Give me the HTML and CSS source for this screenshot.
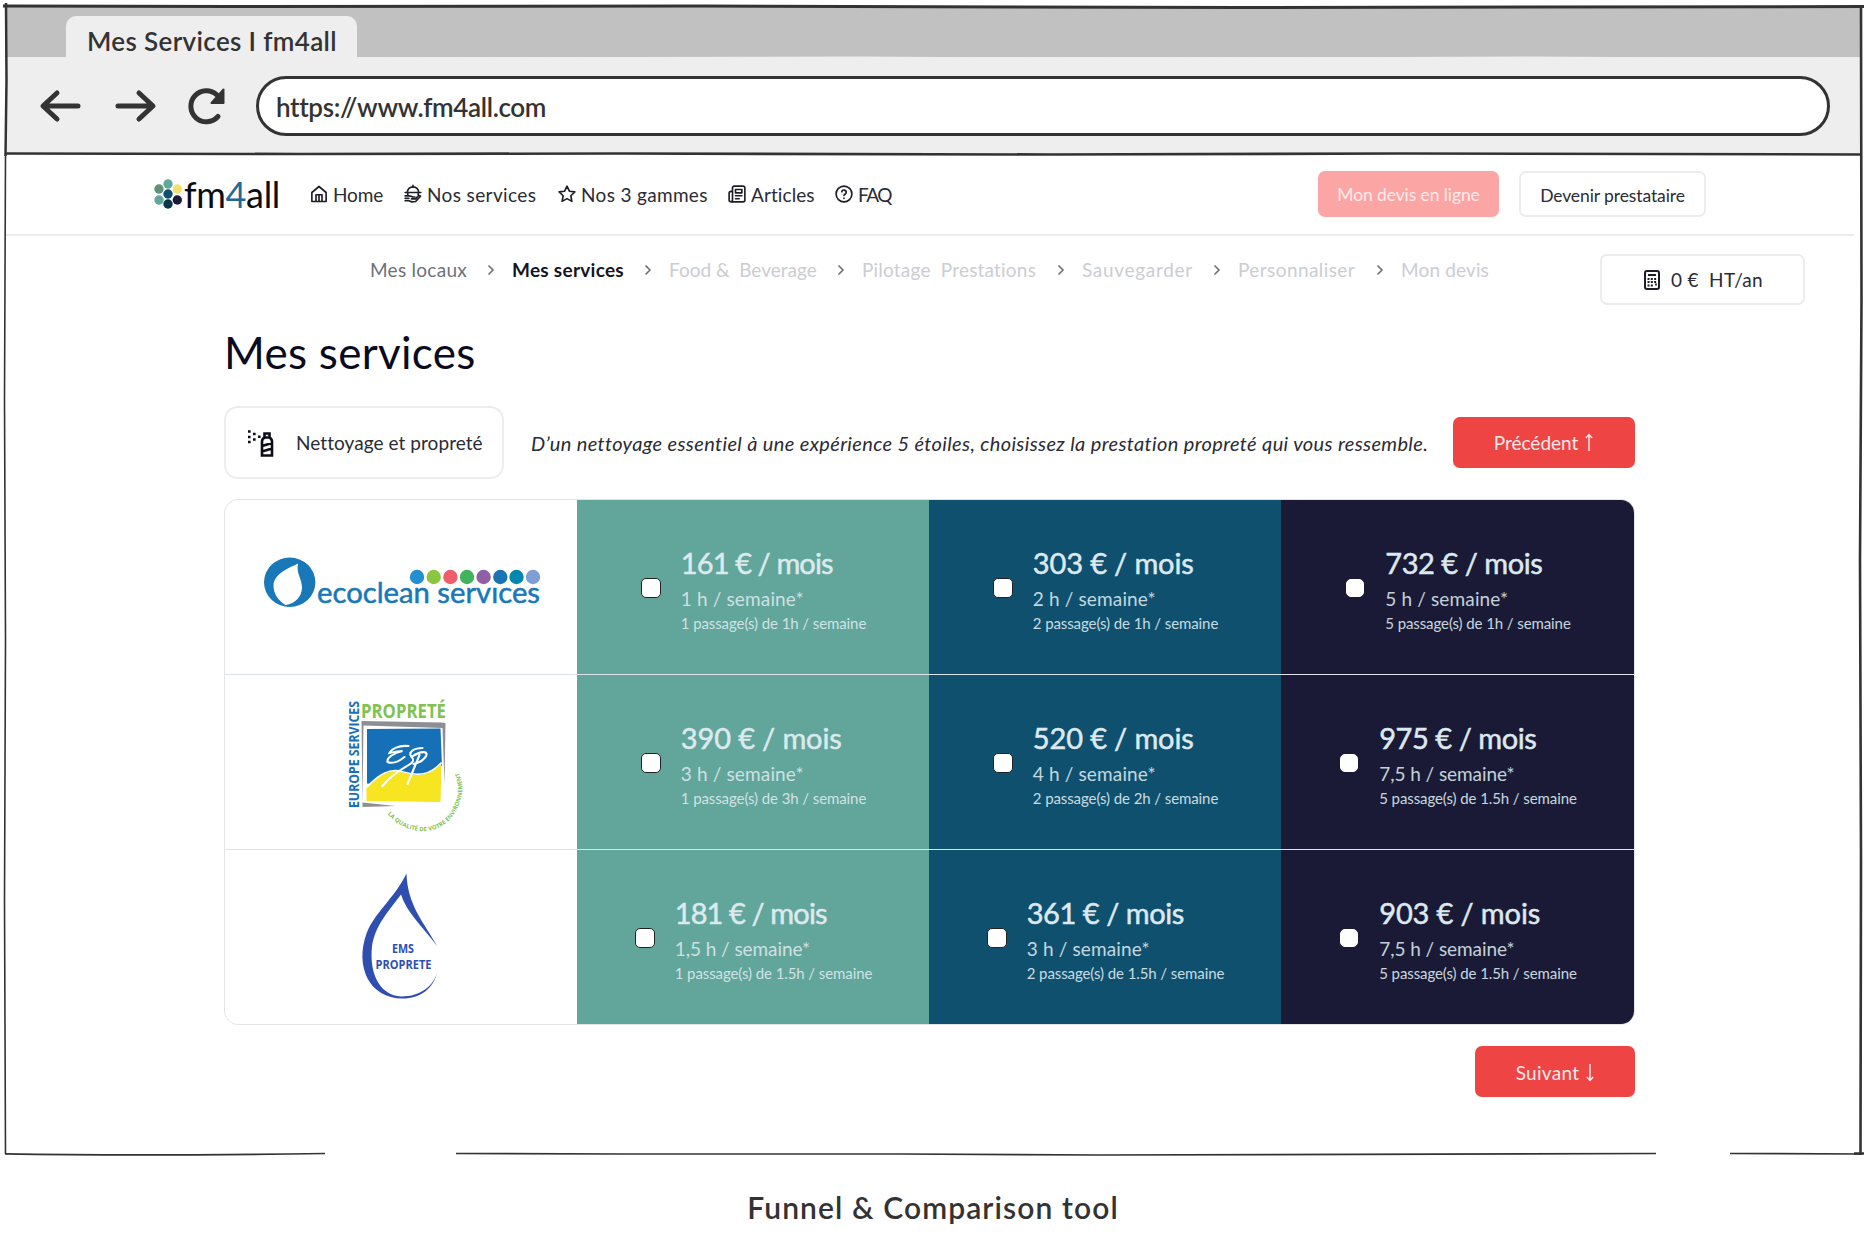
FILE: index.html
```html
<!DOCTYPE html>
<html lang="fr">
<head>
<meta charset="utf-8">
<title>Mes Services | fm4all</title>
<link rel="stylesheet" href="styles.css">
</head>
<body>
<div class="browser">
  <div class="tabs"><div class="tab"><span class="t-tab">Mes Services I fm4all</span></div></div>
  <div class="toolbar">
    <svg class="ctl" width="40" height="40" viewBox="0 0 40 40"><path d="M38 20H4M17 7L3 20l14 13"/></svg>
    <svg class="ctl fwd" width="40" height="40" viewBox="0 0 40 40"><path d="M2 20h34M23 7l14 13-14 13"/></svg>
    <svg class="ctl rel" width="40" height="40" viewBox="0 0 40 40"><path d="M31 30.500A15.500 15.500 0 1 1 30 9"/><path class="fill" d="M36.500 3.500V17H24.500z"/></svg>
    <div class="url"><span class="t-url">https://www.fm4all.com</span></div>
  </div>
  <header class="nav">
    <div class="logo">
      <svg width="30" height="30" viewBox="0 0 30 30"><circle cx="14" cy="5" r="4.700" fill="#62a79b"/><circle cx="5" cy="10" r="4.700" fill="#5b9279"/><circle cx="23.300" cy="10" r="4.700" fill="#f4de6c"/><circle cx="14" cy="15" r="4.700" fill="#10506f"/><circle cx="5" cy="21" r="4.700" fill="#62a79b"/><circle cx="23.300" cy="21" r="4.700" fill="#1b1a38"/><circle cx="14" cy="25" r="4.700" fill="#0c3548"/></svg>
      <span class="t-logo">fm<b>4</b>all</span>
    </div>
    <nav class="links">
      <a class="n1"><svg class="ic" viewBox="0 0 24 24"><path d="M2.500 10L12 2l9.500 8v12h-19zM8 22v-9h8v9M12 13v9"/></svg><span>Home</span></a>
      <a class="n2"><svg class="ic" viewBox="0 0 24 24"><path d="M12 .5V3M4.500 9.500a7.500 7 0 0 1 15 0M1.500 10h21M5 10v3.500M19 10v3M1.500 14.500h5c3 0 4 1.500 6 1.500h2M1.500 21h5l4 1.500 5-.5 6.500-7c-1-1.500-2.500-1-3.500 0l-3 3.500H10M1.500 17.800h5"/></svg><span>Nos services</span></a>
      <a class="n3"><svg class="ic" viewBox="0 0 24 24"><path d="M12 1.500l3.200 6.800 7.300.9-5.400 5.100 1.400 7.500L12 18.200l-6.500 3.600 1.400-7.500L1.500 9.200l7.300-.9z"/></svg><span>Nos 3 gammes</span></a>
      <a class="n4"><svg class="ic" viewBox="0 0 24 24"><path d="M4 22.500h16a2.500 2.500 0 0 0 2.500-2.500V4A2.500 2.500 0 0 0 20 1.500H8.500A2.500 2.500 0 0 0 6 4v16a2.200 2.200 0 0 1-4.500 0v-9c0-1.500.9-2.500 2.500-2.500h2M10 6h8.500v4.500H10zM10 14.300h8.500M10 18.300h5"/></svg><span>Articles</span></a>
      <a class="n5"><svg class="ic" viewBox="0 0 24 24"><circle cx="12" cy="12" r="10.500"/><path d="M9 9a3 3 0 0 1 5.900 1c0 2-2.900 2.500-2.900 4M12 17.500v.5"/></svg><span>FAQ</span></a>
    </nav>
    <div class="actions">
      <div class="btn pink">Mon devis en ligne</div>
      <div class="btn line">Devenir prestataire</div>
    </div>
  </header>
  <div class="crumbrow">
    <div class="crumbs">
      <span class="c1">Mes locaux</span><svg class="sep" viewBox="0 0 8 12"><path d="M1.500 1.500L6 6l-4.500 4.500"/></svg>
      <span class="c2">Mes services</span><svg class="sep" viewBox="0 0 8 12"><path d="M1.500 1.500L6 6l-4.500 4.500"/></svg>
      <span class="c3">Food &amp;&nbsp; Beverage</span><svg class="sep" viewBox="0 0 8 12"><path d="M1.500 1.500L6 6l-4.500 4.500"/></svg>
      <span class="c4">Pilotage&nbsp; Prestations</span><svg class="sep" viewBox="0 0 8 12"><path d="M1.500 1.500L6 6l-4.500 4.500"/></svg>
      <span class="c5">Sauvegarder</span><svg class="sep" viewBox="0 0 8 12"><path d="M1.500 1.500L6 6l-4.500 4.500"/></svg>
      <span class="c6">Personnaliser</span><svg class="sep" viewBox="0 0 8 12"><path d="M1.500 1.500L6 6l-4.500 4.500"/></svg>
      <span class="c7">Mon devis</span>
    </div>
    <div class="total">
      <svg width="16" height="20" viewBox="0 0 16 20"><rect x="1" y="1" width="14" height="18" rx="2"/><path d="M4 5h8"/><path class="dots" d="M3.500 9h9M3.500 12h9M3.500 15.500h6M12 13.500v3"/></svg>
      <span>0 €&nbsp; HT/an</span>
    </div>
  </div>
  <main class="content">
    <h1>Mes services</h1>
    <div class="intro">
      <div class="chip">
        <svg width="28" height="28" viewBox="0 0 28 28"><path class="spray" d="M1 2.500h2.600M1 8h2.600M1 13h2.600M6 5h2.600M6 10.500h2.600M11 7.700h2.600"/><path class="can" d="M17.500 8.500v-4h5v4M15 26.500V12.500c0-2 1.500-3.500 3-4h4c1.500.5 3 2 3 4v14zM15 17l10-3M15 22.500l10-3"/></svg>
        <span>Nettoyage et propreté</span>
      </div>
      <em class="t-em">D’un nettoyage essentiel à une expérience 5 étoiles, choisissez la prestation propreté qui vous ressemble.</em>
      <div class="btn red prev"><span>Précédent</span><svg class="arr" viewBox="0 0 8 18"><path d="M4 17V1.500M1 4.800L4 1.500l3 3.300"/></svg></div>
    </div>
    <div class="grid">
      <div class="brand">
        <svg width="300" height="80" viewBox="251 547 300 80"><ellipse cx="289.700" cy="582.300" rx="25.700" ry="24.700" fill="#1978b8"/><path d="M298 563.500c-10 5-23 10-24.500 21-.5 10 6 17 12 20.500 10-1.500 16-8 16.500-17 0-10-6-14-4-24.500z" fill="#fff"/><g><circle cx="417" cy="577" r="7.200" fill="#228fd0"/><circle cx="433.700" cy="577" r="7.200" fill="#8cc540"/><circle cx="450.400" cy="577" r="7.200" fill="#ef5d6c"/><circle cx="467" cy="577" r="7.200" fill="#41b35a"/><circle cx="483.600" cy="577" r="7.200" fill="#8f5fa8"/><circle cx="500.300" cy="577" r="7.200" fill="#1a73b4"/><circle cx="516.500" cy="577" r="7.200" fill="#0487ae"/><circle cx="533" cy="577" r="7.200" fill="#7d9fd3"/></g><text x="317" y="603" textLength="223" lengthAdjust="spacingAndGlyphs" class="eco">ecoclean servıces</text></svg>
      </div>
      <label class="cell g"><i></i><span><b class="one">161 € / mois</b><u>1 h / semaine*</u><s>1 passage(s) de 1h / semaine</s></span></label>
      <label class="cell b"><i></i><span><b>303 € / mois</b><u>2 h / semaine*</u><s>2 passage(s) de 1h / semaine</s></span></label>
      <label class="cell n"><i></i><span><b class="seven">732 € / mois</b><u>5 h / semaine*</u><s>5 passage(s) de 1h / semaine</s></span></label>
      <div class="brand">
        <svg width="130" height="150" viewBox="335.500 687 130 150"><text class="eur" transform="translate(358.500 808) rotate(-90)" textLength="107" lengthAdjust="spacingAndGlyphs">EUROPE SERVICES</text><text class="pro" x="360.500" y="718" textLength="85" lengthAdjust="spacingAndGlyphs">PROPRETÉ</text><path d="M361 721l80 1.500 4 .5-1 62-2-57-79-2.500-1 77 33 3.500-33 1z" fill="#8d8f94"/><path d="M366.500 729l73.500-.5 1.500 37-34 22-41-4z" fill="#1570b8"/><path d="M366 788c12-13 23-20 37-15.500 14 4 26 4 38-9.500l-1 39-74-1z" fill="#f6e520"/><path d="M366 787.500c12-13 23-20 37-15.500 14 4 26 4 38-9.500" fill="none" stroke="#fff" stroke-width="1.600"/><path d="M408 746c-10-1-17 3-19 7 4-1 9-2 13-2-9 2-16 7-15 11 5 2 12-1 17-5M422 748c-9 0-13 4-12 7 1 3 5 4 1 8-5 4-18 9-29 23M419 755l-12 29M411 757c10-7 18-6 14 0-3 4-7 6-12 7" fill="none" stroke="#fff" stroke-width="2.100" stroke-linecap="round"/><path id="arc" d="M387 814C408 838 446 839 459 803C465 786 460 772 450 758" fill="none"/><text class="env"><textPath href="#arc" textLength="121">LA QUALITÉ DE VOTRE ENVIRONNEMENT</textPath></text></svg>
      </div>
      <label class="cell g"><i></i><span><b>390 € / mois</b><u>3 h / semaine*</u><s>1 passage(s) de 3h / semaine</s></span></label>
      <label class="cell b"><i></i><span><b>520 € / mois</b><u>4 h / semaine*</u><s>2 passage(s) de 2h / semaine</s></span></label>
      <label class="cell n"><i></i><span><b class="seven">975 € / mois</b><u class="half">7,5 h / semaine*</u><s>5 passage(s) de 1.5h / semaine</s></span></label>
      <div class="brand">
        <svg width="90" height="134" viewBox="356.500 869.500 90 134"><path fill-rule="evenodd" d="M407 873c1 31 16 47 31 73-15-20-31-34-36.500-52-12 16-26 31-29 52-3 29 9 49 29 50 20 0 33-11 36.500-25-4 17-17 27-35 27-33 0-48-32-36-65 8-21 27-34 40-60z" fill="#2f4fb0"/><text class="ems" x="392.500" y="952" textLength="22" lengthAdjust="spacingAndGlyphs">EMS</text><text class="ems" x="376" y="968" textLength="56" lengthAdjust="spacingAndGlyphs">PROPRETE</text></svg>
      </div>
      <label class="cell g"><i></i><span><b class="one">181 € / mois</b><u class="half">1,5 h / semaine*</u><s>1 passage(s) de 1.5h / semaine</s></span></label>
      <label class="cell b"><i></i><span><b class="seven">361 € / mois</b><u>3 h / semaine*</u><s>2 passage(s) de 1.5h / semaine</s></span></label>
      <label class="cell n"><i></i><span><b>903 € / mois</b><u class="half">7,5 h / semaine*</u><s>5 passage(s) de 1.5h / semaine</s></span></label>
    </div>
    <div class="next"><div class="btn red"><span class="suiv">Suivant</span><svg class="arr" viewBox="0 0 8 18"><path d="M4 1v15.500M1 13.200l3 3.300 3-3.300"/></svg></div></div>
  </main>
  <svg class="sketch" viewBox="0 0 1866 1234">
    <path d="M3 6L230 6.500 700 6 1240 7.500 1864 6.500" stroke-width="3"/>
    <path d="M6 3L6.500 80 5.500 156" stroke-width="2.500"/>
    <path d="M5.500 155L4.500 400 5.500 640 4.500 900 5.500 1154" stroke-width="1.600"/>
    <path d="M6 153.500L300 154 620 153.500 1050 154.500 1400 153.500 1861 154.500" stroke-width="2.600"/>
    <path d="M1861 5L1861.500 300 1860 560 1861 860 1860.500 1155M1854 1153.500h10" stroke-width="2.600"/>
    <path d="M5 1153.800C120 1156 220 1155 325 1153.500M456 1153.500L620 1154 900 1154 1100 1155 1656 1153.500M1730 1153.500L1862 1154" stroke-width="1.700"/>
    <path class="wear" d="M360 58.500L860 57.500 1130 59 1530 57.500 1859 59.500M1280 150l120-1.500 180 2.500"/>
  </svg>
</div>
<p class="caption">Funnel &amp; Comparison tool</p>
</body>
</html>
```
FILE: styles.css
```css
* { box-sizing: border-box; }
body { margin: 0; width: 1866px; height: 1234px; background: #fff; color: #2a2b34; font: 19px "Lato", sans-serif; white-space: nowrap; overflow: hidden; }
svg { display: block; flex: none; overflow: visible; }
.browser { position: relative; height: 1156px; padding: 6px 5px 0; }
.sketch { position: absolute; left: 0; top: 0; width: 1866px; height: 1234px; pointer-events: none; fill: none; stroke: #333; }
.sketch .wear { stroke: #eee; stroke-width: 2; }

/* browser chrome */
.tabs { height: 51px; padding: 10px 0 0 61px; background: #c1c1c1; }
.tab { width: 291px; height: 41px; padding-left: 21px; line-height: 50px; background: #eee; border-radius: 10px 10px 0 0; }
.t-tab, .t-url { color: #333; font-size: 26px; font-weight: 600; }
.t-tab { letter-spacing: .35px; }
.t-url { letter-spacing: -.36px; }
.toolbar { display: flex; align-items: center; height: 97px; padding: 1px 0 0 35px; background: #eee; }
.ctl { fill: none; stroke: #333; stroke-width: 5; stroke-linecap: round; stroke-linejoin: round; }
.ctl .fill { fill: #333; stroke-width: 2; }
.fwd { margin-left: 36px; }
.rel { margin-left: 31px; }
.url { display: flex; align-items: center; width: 1574px; height: 60px; margin-left: 29px; padding: 1px 0 0 17px; background: #fff; border: 3px solid #333; border-radius: 30px; }

/* site header */
.nav { display: flex; align-items: center; width: 1849px; height: 82px; padding: 0 0 0 149px; border-bottom: 2px solid #ececee; }
.logo { display: flex; align-items: center; gap: 0; width: 156px; }
.t-logo { color: #0c0c10; font-size: 36px; line-height: 38px; letter-spacing: -.34px; }
.t-logo b { color: #1f6a95; font-weight: 400; }
.links { display: flex; width: 1008px; }
.links a { display: flex; align-items: center; gap: 5px; }
.ic { width: 18px; height: 18px; fill: none; stroke: #1c1d26; stroke-width: 2.2; stroke-linejoin: round; stroke-linecap: round; }
.n1 { width: 94px; letter-spacing: -.1px; }
.n2 { width: 154px; letter-spacing: .38px; }
.n3 { width: 170px; letter-spacing: .33px; }
.n4 { width: 107px; letter-spacing: .09px; }
.n5 { letter-spacing: -1.4px; }
.actions { display: flex; gap: 20px; font-size: 17.5px; letter-spacing: -.1px; }
.btn { display: flex; align-items: center; justify-content: center; border-radius: 7px; }
.pink { width: 181px; height: 46px; padding-top: 1px; background: #fca5a5; color: #fdeaea; }
.line { width: 187px; height: 46px; padding-top: 2px; border: 2px solid #ececee; }

/* breadcrumb */
.crumbrow { display: flex; padding-left: 365px; }
.crumbs { display: flex; align-items: center; width: 1230px; height: 66px; padding-top: 1px; color: #cbcdd2; }
.crumbs span { flex: none; }
.c1 { width: 97px; color: #6c707a; letter-spacing: .27px; }
.c2 { width: 112px; color: #14151f; font-weight: 700; letter-spacing: .27px; }
.c3 { width: 148px; letter-spacing: 0; }
.c4 { width: 175px; letter-spacing: .2px; }
.c5 { width: 111px; letter-spacing: .7px; }
.c6 { width: 118px; letter-spacing: .42px; }
.c7 { letter-spacing: .15px; }
.sep { width: 8px; height: 12px; margin: 0 17px 0 20px; fill: none; stroke: #6c707a; stroke-width: 1.6; }
.total { display: flex; align-items: center; justify-content: center; gap: 11px; width: 205px; height: 51px; margin-top: 18px; padding-left: 2px; border: 2px solid #ececee; border-radius: 7px; letter-spacing: .3px; }
.total svg { fill: none; stroke: #1c1d26; stroke-width: 2; }
.total .dots { stroke-dasharray: 2 1.3; stroke-width: 1.8; }

/* page */
.content { width: 1411px; margin-left: 219px; }
h1 { height: 101px; margin: 0; padding-top: 18px; color: #0a0b1c; font-size: 44px; line-height: 58px; font-weight: 400; letter-spacing: .28px; }
.intro { display: flex; align-items: center; height: 73px; }
.chip { display: flex; align-items: center; gap: 21px; width: 280px; height: 73px; padding-left: 21px; border: 2px solid #ededf0; border-radius: 14px; letter-spacing: .06px; }
.chip svg { fill: none; stroke: #0c0d18; stroke-width: 2.6; }
.chip .spray { stroke-width: 2.4; }
.t-em { width: 922px; margin-left: 27px; font-size: 20px; line-height: 24px; letter-spacing: .36px; }
.red { height: 51px; gap: 6px; background: #ef4444; color: #fde8e8; }
.arr { width: 10px; height: 19px; fill: none; stroke: #fde8e8; stroke-width: 1.4; }
.prev { width: 182px; }
.suiv { letter-spacing: .3px; }
.grid { display: grid; grid-template-columns: 352px 352px 352px 353px; grid-auto-rows: 174px; gap: 1px 0; width: 1411px; height: 526px; margin-top: 20px; border: 1px solid #e3e4e8; border-radius: 14px; background: #dde3e8; overflow: hidden; }
.brand { display: flex; align-items: center; justify-content: center; background: #fff; }
.cell { display: flex; align-items: center; justify-content: center; gap: 20px; padding: 1px 0 0 1px; }
.cell i { width: 20px; height: 20px; background: #fff; border: 1.5px solid #222; border-radius: 5px; }
.cell span { display: flex; flex-direction: column; align-items: flex-start; color: #dde9ee; }
.cell b { font-size: 29px; line-height: 38px; font-weight: 400; letter-spacing: -.13px; -webkit-text-stroke: .5px currentColor; }
.cell .one { letter-spacing: -.88px; }
.cell .seven { letter-spacing: -.45px; }
.cell u { font-size: 19px; line-height: 33px; text-decoration: none; letter-spacing: .15px; opacity: .88; }
.cell .half { letter-spacing: -.06px; }
.cell s { font-size: 15px; line-height: 17px; text-decoration: none; letter-spacing: -.09px; opacity: .9; }
.g { background: #62a59a; }
.b { background: #10506f; }
.n { background: #1a1a37; }
.cell.n i { width: 18px; height: 18px; margin: 0 1px; border-color: #fff; }
.next { display: flex; justify-content: flex-end; padding-top: 21px; }
.next .btn { width: 160px; padding: 1px 0 0 1px; }
.caption { margin: 0; padding-top: 34px; text-align: center; color: #333; font-size: 30px; line-height: 34px; font-weight: 600; letter-spacing: 1.1px; }

/* brand logos */
.eco { fill: #1978b8; stroke: #1978b8; stroke-width: .5; font-size: 28px; }
.eur { fill: #1a70b8; font: 700 14px "Open Sans", sans-serif; }
.pro { fill: #80c24c; font: 700 20px "Open Sans", sans-serif; }
.env { fill: #80c24c; font: 700 5.8px "Open Sans", sans-serif; }
.ems { fill: #2f4fb0; font: 700 12.5px "Open Sans", sans-serif; }
```
